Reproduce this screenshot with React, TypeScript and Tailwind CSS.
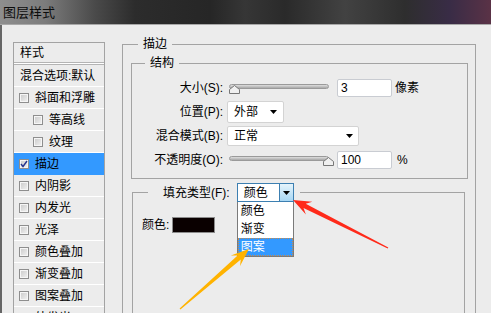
import React from 'react';

const items = [
  { label: '斜面和浮雕' },
  { label: '等高线', sub: true },
  { label: '纹理', sub: true },
  { label: '描边', checked: true, active: true },
  { label: '内阴影' },
  { label: '内发光' },
  { label: '光泽' },
  { label: '颜色叠加' },
  { label: '渐变叠加' },
  { label: '图案叠加' },
  { label: '外发光' },
];

function Check({ checked }: { checked?: boolean }) {
  return (
    <span className="flex h-[10px] w-[10px] shrink-0 items-center justify-center border border-[#8e8e8e] bg-[linear-gradient(135deg,#c9c9c9,#f3f3f3)] shadow-[inset_0_0_0_1px_#f6f6f6]">
      {checked && (
        <svg width="8" height="8" viewBox="0 0 8 8">
          <path d="M1 4 L3 6.5 L7 1" fill="none" stroke="#27358f" strokeWidth="1.4" />
        </svg>
      )}
    </span>
  );
}

function Arrow() {
  return (
    <svg width="7" height="4" viewBox="0 0 7 4">
      <path d="M0 0 H7 L3.5 4 Z" fill="#000" />
    </svg>
  );
}

function Slider({ at }: { at: 'start' | 'end' }) {
  return (
    <div className="relative h-[14px] w-[105px]">
      <div className="absolute left-[2px] top-[3px] h-[5px] w-[100px] rounded-full border border-[#9a9a9a] bg-[linear-gradient(#dedede,#a8a8a8)]" />
      <svg
        className={at === 'start' ? 'absolute left-[2px] top-[4px]' : 'absolute left-[96px] top-[4px]'}
        width="11"
        height="9"
        viewBox="0 0 11 9"
      >
        <path d="M0.5 8.5 V4.5 L5.5 0.5 L10.5 4.5 V8.5 Z" fill="#f0f0f0" stroke="#777" />
      </svg>
    </div>
  );
}

function Field({ value }: { value: string }) {
  return (
    <div className="ml-[5px] flex h-[18px] w-[55px] items-center rounded-[2px] border border-[#c9ccd2] bg-white pl-[3px] leading-none">
      {value}
    </div>
  );
}

export default function App() {
  return (
    <div className="relative h-[313px] w-[491px] overflow-hidden bg-[#ececec] text-[12px] text-black font-['Liberation_Sans','Noto_Sans_CJK_SC',sans-serif]">
      {/* title bar */}
      <div className="flex h-[25px] items-center border-b border-[#a8a8a8] bg-[linear-gradient(to_right,#8e8e8e_0px,#7c7c7c_45px,#4a4a4a_95px,#2c2c2c_135px,#262626_210px,#363636_245px,#2a2a2a_285px,#424242_345px,#2e2e2e_405px,#392c46_450px,#5a3246_491px)] pl-[3px]">
        <span className="text-[13px] leading-none text-[#0c0c0c]">图层样式</span>
      </div>

      <div className="flex h-[288px] items-start border-l-2 border-[#666]">
        {/* styles list */}
        <div className="ml-[11px] mt-[17px] w-[92px] border border-[#a3a3a3]">
          <div className="flex h-[19px] items-center pl-[6px] leading-none">样式</div>
          <div className="h-px bg-[#b4b4b4]" />
          <div className="h-px bg-white" />
          <div className="h-px bg-[#b4b4b4]" />
          <div className="flex h-[22px] items-center border-b border-white pl-[6px] leading-none">
            混合选项:默认
          </div>
          {items.map((it) => (
            <div
              key={it.label}
              className={
                'flex h-[22px] items-center gap-[6px] border-b leading-none ' +
                (it.active ? 'border-[#3399ff] bg-[#3399ff] ' : 'border-white ') +
                (it.sub ? 'pl-[19px]' : 'pl-[5px]')
              }
            >
              <Check checked={it.checked} />
              <span>{it.label}</span>
            </div>
          ))}
        </div>

        {/* stroke group */}
        <fieldset className="ml-[17px] mt-[11px] h-[300px] w-[354px] border border-[#a3a3a3] pl-[8px] pr-[7px] pt-[3px]">
          <legend className="ml-[7px] px-[5px] leading-[16px]">描边</legend>

          <fieldset className="border border-[#a3a3a3] pb-[6px] pt-[5px]">
            <legend className="ml-[13px] px-[5px] leading-[16px]">结构</legend>

            <div className="flex h-[24px] items-center">
              <div className="w-[91px] text-right leading-none">大小(S):</div>
              <div className="ml-[4px]">
                <Slider at="start" />
              </div>
              <Field value="3" />
              <span className="ml-[3px] leading-none">像素</span>
            </div>

            <div className="flex h-[24px] items-center">
              <div className="w-[91px] text-right leading-none">位置(P):</div>
              <div className="ml-[4px] flex h-[22px] w-[57px] items-center justify-between rounded-[2px] border border-[#d3d3d3] bg-white pl-[6px] pr-[6px] leading-none">
                <span>外部</span>
                <Arrow />
              </div>
            </div>

            <div className="flex h-[24px] items-center">
              <div className="w-[91px] text-right leading-none">混合模式(B):</div>
              <div className="ml-[4px] flex h-[20px] w-[132px] items-center justify-between rounded-[2px] border border-[#d3d3d3] bg-white pl-[6px] pr-[5px] leading-none">
                <span>正常</span>
                <Arrow />
              </div>
            </div>

            <div className="flex h-[24px] items-center">
              <div className="w-[91px] text-right leading-none">不透明度(O):</div>
              <div className="ml-[4px]">
                <Slider at="end" />
              </div>
              <Field value="100" />
              <span className="ml-[5px] leading-none">%</span>
            </div>
          </fieldset>

          <fieldset className="ml-[1px] mr-[3px] mt-[4px] h-[140px] border border-[#a3a3a3]">
            <legend className="ml-[15px] pl-[15px] pr-[6px]">
              <div className="flex h-[19px] items-center gap-[7px]">
                <span className="leading-none">填充类型(F):</span>
                <div className="relative">
                  <div className="flex h-[19px] w-[57px] items-stretch border border-[#3c7fb1] bg-white">
                    <span className="flex flex-1 items-center pl-[6px] leading-none">颜色</span>
                    <span className="flex w-[14px] items-center justify-center border-l border-[#3c7fb1] bg-[linear-gradient(#e5f4fc,#a7d7f4)]">
                      <Arrow />
                    </span>
                  </div>
                  <div className="absolute left-0 top-[19px] w-[57px] border border-[#7a7a7a] border-t-0 bg-white">
                    <div className="flex h-[18px] items-center pl-[3px] leading-none">颜色</div>
                    <div className="flex h-[18px] items-center pl-[3px] leading-none">渐变</div>
                    <div className="flex h-[18px] items-center border border-dotted border-[#c98a4a] bg-[#3399ff] pl-[2px] leading-none text-white">
                      图案
                    </div>
                  </div>
                </div>
              </div>
            </legend>

            <div className="mt-[15px] flex items-center pl-[9px]">
              <span className="leading-none">颜色:</span>
              <div className="ml-[3px] h-[16px] w-[43px] border border-[#8c8c8c] bg-[#0a0000]" />
            </div>
          </fieldset>
        </fieldset>
      </div>

      {/* annotation arrows */}
      <svg className="pointer-events-none absolute left-0 top-0" width="491" height="313" viewBox="0 0 491 313">
        <polygon
          points="293,200 312.3,201.8 305.7,203.7 388.3,247.5 387.7,248.5 303.5,208.1 305.9,214.4"
          fill="#ff2a1a"
        />
        <polygon
          points="249,249 240,266.1 240.8,259.4 180.4,309.5 179.6,308.5 237.6,255.6 230.8,255.5"
          fill="#ffb300"
        />
      </svg>
    </div>
  );
}
